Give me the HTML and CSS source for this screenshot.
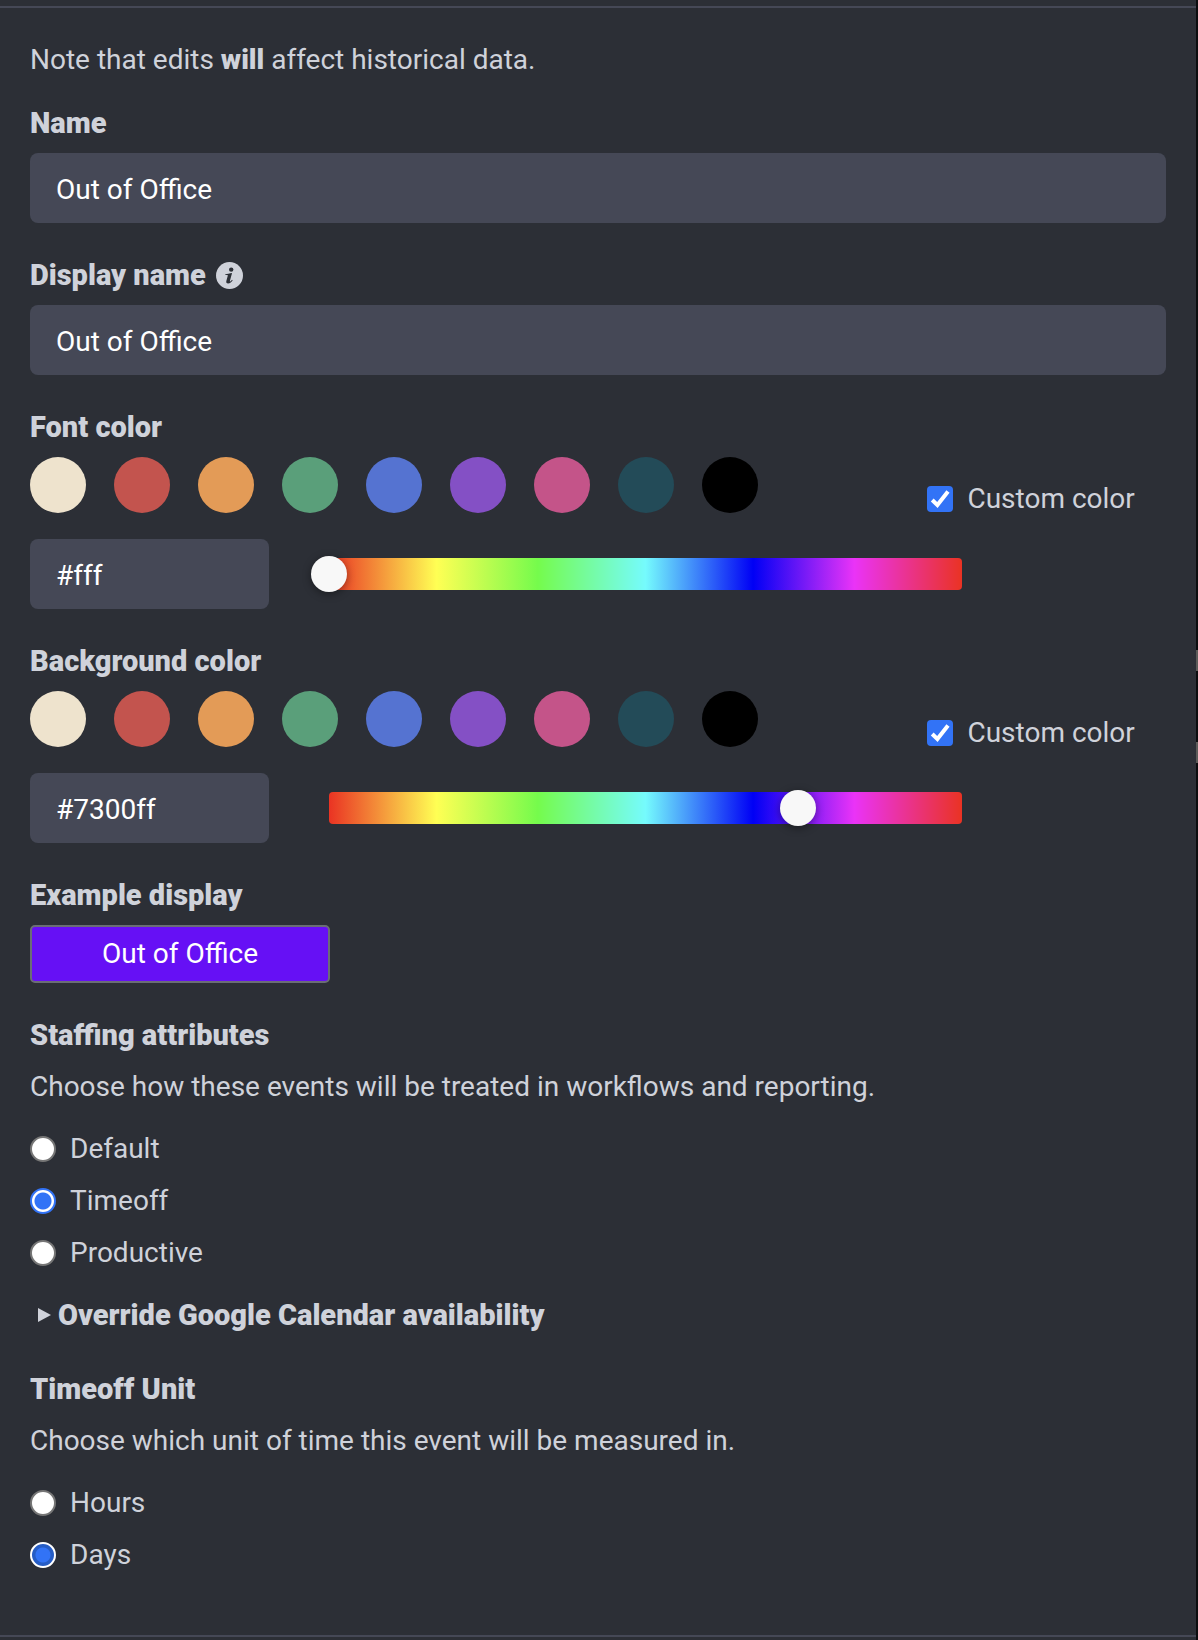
FILE: index.html
```html
<!DOCTYPE html>
<html lang="en">
<head>
  <meta charset="UTF-8">
  <meta name="viewport" content="width=device-width, initial-scale=1.0">
  <title>Edit Event Type</title>
  <link rel="stylesheet" href="styles.css">
</head>
<body>
  <form class="panel">
    <p class="note">Note that edits <strong>will</strong> affect historical data.</p>

    <div class="group">
      <label class="title" for="name">Name</label>
      <input type="text" class="text-input" id="name" value="Out of Office">
    </div>

    <div class="group">
      <div class="title-row">
        <label class="title" for="display-name">Display name</label>
        <svg class="info-icon" viewBox="0 0 27 27" aria-hidden="true">
          <circle cx="13.5" cy="13.5" r="13.5" fill="#cfd2da"/>
          <circle cx="15.2" cy="7.6" r="2.2" fill="#2c2f36"/>
          <path d="M9.4 12.2c1.800-.1 4-.6 6-1.300l.6.3-2 7.200c-.3 1-.1 1.200.3 1 .6-.3 1.200-1 1.700-1.700l.7.500c-1.100 1.900-2.800 3.300-4.600 3.300-1.600 0-2.200-1.100-1.700-2.800l1.300-4.600c.2-.8 0-1-.7-1.100l-1.800-.1z" fill="#2c2f36"/>
        </svg>
      </div>
      <input type="text" class="text-input" id="display-name" value="Out of Office">
    </div>

    <div class="group">
      <label class="title" for="font-color">Font color</label>
      <div class="swatch-row">
        <div class="swatches">
          <button type="button" class="swatch cream" aria-label="Cream"></button>
          <button type="button" class="swatch red" aria-label="Red"></button>
          <button type="button" class="swatch orange" aria-label="Orange"></button>
          <button type="button" class="swatch green" aria-label="Green"></button>
          <button type="button" class="swatch blue" aria-label="Blue"></button>
          <button type="button" class="swatch purple" aria-label="Purple"></button>
          <button type="button" class="swatch pink" aria-label="Pink"></button>
          <button type="button" class="swatch teal" aria-label="Teal"></button>
          <button type="button" class="swatch black" aria-label="Black"></button>
        </div>
        <label class="custom-color"><input type="checkbox" class="checkbox" checked> Custom color</label>
      </div>
      <div class="picker-row">
        <input type="text" class="text-input hex-input" id="font-color" value="#fff">
        <div class="hue-track">
          <input type="range" class="hue" min="0" max="360" value="0" aria-label="Font hue">
        </div>
      </div>
    </div>

    <div class="group">
      <label class="title" for="background-color">Background color</label>
      <div class="swatch-row">
        <div class="swatches">
          <button type="button" class="swatch cream" aria-label="Cream"></button>
          <button type="button" class="swatch red" aria-label="Red"></button>
          <button type="button" class="swatch orange" aria-label="Orange"></button>
          <button type="button" class="swatch green" aria-label="Green"></button>
          <button type="button" class="swatch blue" aria-label="Blue"></button>
          <button type="button" class="swatch purple" aria-label="Purple"></button>
          <button type="button" class="swatch pink" aria-label="Pink"></button>
          <button type="button" class="swatch teal" aria-label="Teal"></button>
          <button type="button" class="swatch black" aria-label="Black"></button>
        </div>
        <label class="custom-color"><input type="checkbox" class="checkbox" checked> Custom color</label>
      </div>
      <div class="picker-row">
        <input type="text" class="text-input hex-input" id="background-color" value="#7300ff">
        <div class="hue-track">
          <input type="range" class="hue" min="0" max="360" value="267" aria-label="Background hue">
        </div>
      </div>
    </div>

    <div class="group">
      <div class="title">Example display</div>
      <div class="example">Out of Office</div>
    </div>

    <div class="group" role="radiogroup" aria-labelledby="staffing-title">
      <div class="title" id="staffing-title">Staffing attributes</div>
      <p class="help">Choose how these events will be treated in workflows and reporting.</p>
      <div class="options">
        <label class="option"><input type="radio" class="radio" name="staffing" value="default"> Default</label>
        <label class="option"><input type="radio" class="radio" name="staffing" value="timeoff" checked> Timeoff</label>
        <label class="option"><input type="radio" class="radio" name="staffing" value="productive"> Productive</label>
      </div>
      <details class="override">
        <summary>Override Google Calendar availability</summary>
      </details>
    </div>

    <div class="group" role="radiogroup" aria-labelledby="unit-title">
      <div class="title" id="unit-title">Timeoff Unit</div>
      <p class="help">Choose which unit of time this event will be measured in.</p>
      <div class="options">
        <label class="option"><input type="radio" class="radio" name="unit" value="hours"> Hours</label>
        <label class="option"><input type="radio" class="radio active" name="unit" value="days" checked> Days</label>
      </div>
    </div>
  </form>
</body>
</html>
```
FILE: styles.css
```css
* {
  box-sizing: border-box;
}

/* the page behind the panel shows through along the right edge */
body {
  margin: 0;
  padding: 6px 2px 3px 0;
  background:
    linear-gradient(#2c2f36, #2c2f36) no-repeat 0 0 / calc(100% - 2px) 100%,
    linear-gradient(#5c5b59, #5c5b59) no-repeat 100% 650px / 2px 21px,
    linear-gradient(#5c5b59, #5c5b59) no-repeat 100% 742px / 2px 21px,
    #0c0d0f;
  color: #cfd2da;
  font-family: Roboto, "Liberation Sans", sans-serif;
  font-size: 28px;
  line-height: 44px;
}

p {
  margin: 0;
}

.panel {
  padding: 30px 30px 58px;
  border-top: 2px solid #454856;
  border-bottom: 2px solid #454856;
}

.note {
  margin-bottom: 19px;
}

.note strong {
  font-weight: 900;
}

.group {
  margin-bottom: 30px;
}

.group:last-child {
  margin-bottom: 0;
}

.title {
  display: block;
  margin-bottom: 8px;
  font-size: 29px;
  font-weight: 900;
}

.title-row {
  display: flex;
  align-items: center;
  gap: 10px;
  margin-bottom: 8px;
}

.title-row .title {
  margin-bottom: 0;
}

.info-icon {
  width: 27px;
  height: 27px;
}

.text-input {
  display: block;
  width: 100%;
  height: 70px;
  padding: 2px 26px 0;
  border: none;
  border-radius: 8px;
  background-color: #454856;
  color: #fff;
  font: inherit;
}

.swatch-row {
  display: flex;
  justify-content: space-between;
  align-items: flex-start;
  margin-bottom: 18px;
}

.swatches {
  display: flex;
  gap: 28px;
}

.swatch {
  width: 56px;
  height: 56px;
  padding: 0;
  border: none;
  border-radius: 50%;
  cursor: pointer;
}

.cream { background-color: #eee3cd; }
.red { background-color: #c3544e; }
.orange { background-color: #e39b57; }
.green { background-color: #5a9f7a; }
.blue { background-color: #5573d1; }
.purple { background-color: #8450c5; }
.pink { background-color: #c45489; }
.teal { background-color: #234b58; }
.black { background-color: #000; }

.custom-color {
  display: flex;
  align-items: center;
  gap: 14px;
  width: 21%;
  padding-top: 20px;
}

.checkbox,
.radio {
  flex: none;
  width: 26px;
  height: 26px;
  margin: 0;
  appearance: none;
}

.checkbox {
  border-radius: 4px;
  background: #fff;
}

.checkbox:checked {
  background: #3273f6 url("data:image/svg+xml,%3Csvg xmlns='http://www.w3.org/2000/svg' viewBox='0 0 26 26'%3E%3Cpath d='M5.200 14l5.200 5L21 5.500' fill='none' stroke='white' stroke-width='4'/%3E%3C/svg%3E");
}

.picker-row {
  display: flex;
  align-items: center;
  gap: 60px;
  padding-right: 18%;
}

.hex-input {
  flex: none;
  width: 239px;
}

.hue-track {
  flex: 1;
  height: 32px;
  border-radius: 4px;
  background: linear-gradient(to right, #ea3323 0%, #ffff54 17%, #75fb4c 33%, #75fbfd 50%, #0000f5 67%, #ea33f7 83%, #ea3323 100%);
}

/* wider than the track so the thumb is centered on its ends */
.hue {
  display: block;
  width: calc(100% + 36px);
  height: 32px;
  margin: 0 -18px;
  background: transparent;
  appearance: none;
}

.hue::-webkit-slider-thumb {
  width: 36px;
  height: 36px;
  border-radius: 50%;
  background-color: #f8f8f8;
  box-shadow: 0 2px 8px rgba(0, 0, 0, 0.4);
  appearance: none;
}

.example {
  width: 300px;
  padding: 5px;
  border: 2px solid #6b6d75;
  border-radius: 5px;
  background-color: #6610f5;
  color: #fff;
  text-align: center;
}

.help {
  margin-bottom: 18px;
}

.options {
  display: flex;
  flex-direction: column;
  align-items: flex-start;
  gap: 8px;
}

.option {
  display: flex;
  align-items: center;
  gap: 14px;
}

.radio {
  border: 2px solid #767676;
  border-radius: 50%;
  background-color: #fff;
}

.radio:checked {
  border-color: #3273f6;
  background: radial-gradient(circle, #3273f6 8px, #fff 9px);
}

.radio.active:checked {
  border-color: #fff;
  background: radial-gradient(circle, #3273f6 7px, #265dc5 8px);
}

.override {
  margin-top: 18px;
}

.override summary {
  display: flex;
  align-items: center;
  gap: 7px;
  padding-left: 8px;
  font-size: 29px;
  font-weight: 900;
  cursor: pointer;
}

.override summary::before {
  content: "";
  border-left: 13px solid #cfd2da;
  border-top: 7px solid transparent;
  border-bottom: 7px solid transparent;
}
```
